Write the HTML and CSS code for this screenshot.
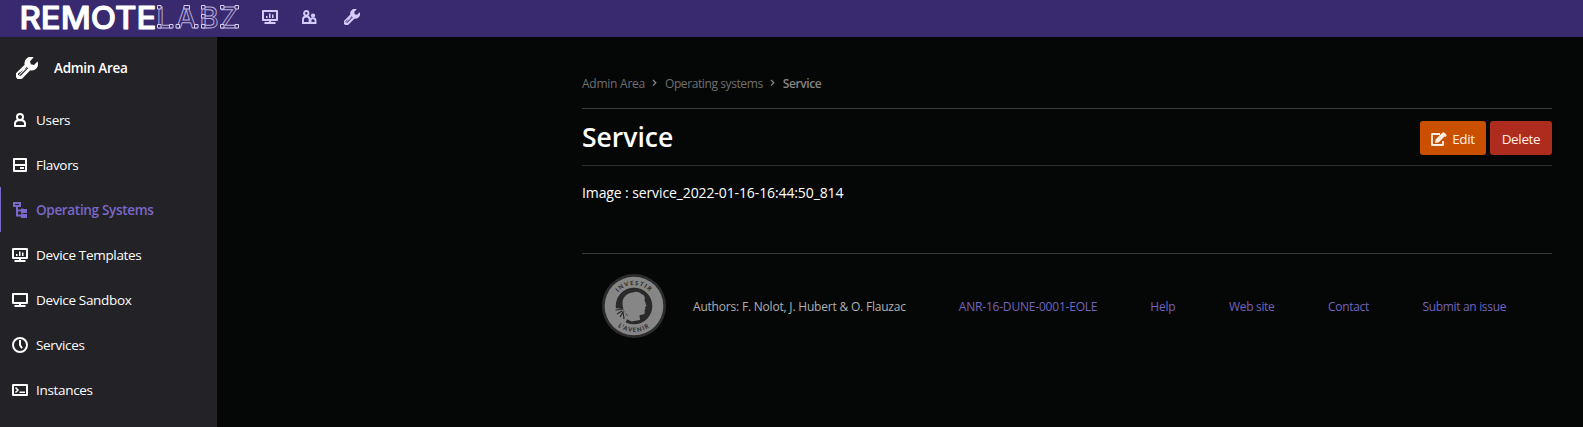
FILE: index.html
```
<!DOCTYPE html>
<html lang="en">
<head>
<meta charset="utf-8">
<title>Service - RemoteLabz</title>
<link rel="stylesheet" href="styles.css">
</head>
<body>
<svg width="0" height="0" class="defs">
  <defs>
    <symbol id="monitor-chart" viewBox="0 0 16 14"><path fill="none" stroke="currentColor" stroke-width="2" stroke-linejoin="round" d="M1 1h14v9H1z"/><path fill="currentColor" d="M7 9h2v3H7zM2.500 12h11v2h-11zM4 6h1.500v2H4zM7 3.500h1.500V8H7zM10 4.500h1.500V8H10z"/></symbol>
    <symbol id="monitor" viewBox="0 0 16 14"><path fill="none" stroke="currentColor" stroke-width="2" stroke-linejoin="round" d="M1 1h14v9H1z"/><path fill="currentColor" d="M7 9h2v3H7zM2.500 12h11v2h-11z"/></symbol>
    <symbol id="wrench" viewBox="0 0 16 16"><path fill="currentColor" fill-rule="evenodd" d="M12.800.35A4.600 4.600 0 0 0 6.300 5.600L.9 10.900a3 3 0 1 0 4.200 4.200l5.300-5.400a4.600 4.600 0 0 0 5.200-6.400l-2.500 2.500-2.300-.5-.6-2.300zM8.600 7.500l-5.700 5.400c-1.100 1-2.100 0-1.100-1z M8.800 8.200 3.700 13.400c-.9.900-2-.2-1.200-1.100l5.300-5.100z"/></symbol>
    <symbol id="user" viewBox="0 0 12 14"><path fill="none" stroke="currentColor" stroke-width="2" stroke-linejoin="round" d="M1 13v-2.500C1 8.700 2.500 7.600 4.300 7.200h3.400C9.500 7.600 11 8.700 11 10.500V13z"/><circle cx="6" cy="4.100" r="3" fill="none" stroke="currentColor" stroke-width="2"/></symbol>
    <symbol id="users" viewBox="0 0 15 14"><g fill="none" stroke="currentColor" stroke-width="1.900"><path d="M1 13V9.500c0-2 1.500-3 3.300-3s3.300 1 3.300 3V13z"/><circle cx="4.300" cy="3.200" r="2.200"/><path d="M8.500 13h5v-2.500c0-1.500-1.400-2.300-2.700-2.300-1.200 0-2.300.7-2.300 2.300z"/></g><circle cx="11" cy="5.500" r="2.100" fill="currentColor"/></symbol>
    <symbol id="disk" viewBox="0 0 14 14"><path fill="none" stroke="currentColor" stroke-width="2" stroke-linejoin="round" d="M1 1h12v12H1zM1 7h12"/><path fill="currentColor" d="M7 9h4v2H7z"/></symbol>
    <symbol id="tree" viewBox="0 0 14 16"><path fill="none" stroke="currentColor" stroke-width="2" d="M1 1h6v3H1zM4 4v9.500h5M4 8.500h5"/><path fill="currentColor" d="M8 6.500h2l1 .5h3v4H8zM8 11.500h2l1 .5h3v4H8z"/></symbol>
    <symbol id="clock" viewBox="0 0 16 16"><circle cx="8" cy="8" r="7" fill="none" stroke="currentColor" stroke-width="2"/><path fill="none" stroke="currentColor" stroke-width="2" d="M8 3v5l2 3.300"/></symbol>
    <symbol id="terminal" viewBox="0 0 16 12"><path fill="none" stroke="currentColor" stroke-width="2" stroke-linejoin="round" d="M1 1h14v10H1z"/><path fill="none" stroke="currentColor" stroke-width="1.500" d="M3.500 3.500 6 6 3.500 8.500M7.500 8.300H13"/></symbol>
    <symbol id="edit" viewBox="0 0 16 14"><path fill="none" stroke="currentColor" stroke-width="1.800" stroke-linejoin="round" d="M9 2H1v11h11V9"/><path fill="currentColor" d="M4.500 7.500 10.800 1.200l3 3L7.500 10.500 4 11zM11.400.7c.6-.7 1.400-.7 2 0l1.700 1.600c.6.600.6 1.400 0 2l-.8.800-3.500-3.600z"/></symbol>
    <symbol id="chevron" viewBox="0 0 5 8"><path fill="none" stroke="currentColor" stroke-width="1.300" d="M1 1l2.800 2.800L1 6.600"/></symbol>
  </defs>
</svg>
<header class="topbar">
  <svg class="logo" width="220" height="37" viewBox="0 0 220 37">
    <text class="logo-solid" x="-1.500" y="28.500" textLength="137" lengthAdjust="spacingAndGlyphs">REMOTE</text>
    <text class="logo-outline" x="135.500 155 178.500 198.500" y="27.500">LABZ</text>
    <g class="logo-nodes">
      <path d="M136.500 5.500h3.500v3.500h-3.500zM136.500 24.500h3.500v3.500h-3.500zM148.500 24.500h3.500v3.500h-3.500zM155 24.500h3.500v3.500H155zM163 5.500h5.500v3.500H163zM173.500 24.500h3.500v3.500h-3.500zM180.500 5.500h3.500v3.500h-3.500zM180.500 14.500h3.500v3.500h-3.500zM180.500 24.500h3.500v3.500h-3.500zM199.500 5.500h3.500v3.500h-3.500zM214 5.500h3.500v3.500H214zM199.500 24.500h3.500v3.500h-3.500zM214 24.500h3.500v3.500H214z"/>
    </g>
  </svg>
  <nav class="topnav">
    <svg class="w16 h14"><use href="#monitor-chart"/></svg>
    <svg class="w15 h14"><use href="#users"/></svg>
    <svg class="w16 h16"><use href="#wrench"/></svg>
  </nav>
</header>
<div class="shell">
  <aside class="sidebar">
    <div class="side-title"><svg class="big"><use href="#wrench"/></svg><span>Admin Area</span></div>
    <nav>
      <a class="item"><i><svg class="w12 h14"><use href="#user"/></svg></i><span>Users</span></a>
      <a class="item"><i><svg class="w14 h14"><use href="#disk"/></svg></i><span>Flavors</span></a>
      <a class="item active"><i><svg class="w14 h16"><use href="#tree"/></svg></i><span>Operating Systems</span></a>
      <a class="item"><i><svg class="w16 h14"><use href="#monitor-chart"/></svg></i><span>Device Templates</span></a>
      <a class="item"><i><svg class="w16 h14"><use href="#monitor"/></svg></i><span>Device Sandbox</span></a>
      <a class="item"><i><svg class="w16 h16"><use href="#clock"/></svg></i><span>Services</span></a>
      <a class="item"><i><svg class="w16 h12"><use href="#terminal"/></svg></i><span>Instances</span></a>
    </nav>
  </aside>
  <main class="content">
    <div class="crumbs"><span class="c1">Admin Area</span><svg><use href="#chevron"/></svg><span class="c2">Operating systems</span><svg><use href="#chevron"/></svg><b>Service</b></div>
    <div class="heading">
      <h1>Service</h1>
      <div class="actions">
        <a class="btn edit"><svg class="w16 h14"><use href="#edit"/></svg><span>Edit</span></a>
        <a class="btn delete"><span>Delete</span></a>
      </div>
    </div>
    <p class="image-line">Image : service_2022-01-16-16:44:50_814</p>
    <footer class="footer">
      <svg class="seal" viewBox="0 0 64 64">
        <defs><path id="arc-top" d="M11 32a21 21 0 0 1 42 0"/><path id="arc-bottom" d="M6 32a26 26 0 0 0 52 0"/></defs>
        <circle cx="32" cy="32" r="32" fill="#2c2c2c"/><circle cx="32" cy="32" r="29.300" fill="#868686"/><circle cx="32" cy="32" r="18.300" fill="#292929"/>
        <path fill="#868686" d="M20.500 29c0-6 4.500-10 10.500-10.500 3-1.500 6-.5 8.500 1.500 3 1 4 3.500 3 6l2 6-1.500 1 .5 2-1 1 .3 3c-.5 2-3.500 1.500-5.300 2.300l.5 4.700-8.500 1.500-5-2.500 1-4c-3-2-5-7-5-12z"/>
        <path fill="#868686" d="M12.500 34l8.500 1 5 8.500-3 6-8-6z"/><path stroke="#292929" stroke-width="1.200" fill="none" d="M13.500 36l7-.5M15 40l5-3M18 43l3-5 1 7"/>
        <text class="seal-text"><textPath href="#arc-top" startOffset="50%" text-anchor="middle">INVESTIR</textPath></text>
        <text class="seal-text"><textPath href="#arc-bottom" startOffset="50%" text-anchor="middle">L'AVENIR</textPath></text>
      </svg>
      <span class="authors">Authors: F. Nolot, J. Hubert &amp; O. Flauzac</span>
      <a>ANR-16-DUNE-0001-EOLE</a><a>Help</a><a class="tight">Web site</a><a class="tight">Contact</a><a class="tight">Submit an issue</a>
    </footer>
  </main>
</div>
</body>
</html>
```
FILE: styles.css
```
* { box-sizing: border-box; }
body { margin: 0; height: 427px; overflow: hidden; background: #050706; color: #fff; font: 14px/21px "Open Sans", "Noto Sans", sans-serif; display: flex; flex-direction: column; }
svg { flex: none; display: block; }
.defs { display: none; }
.w12 { width: 12px; } .w14 { width: 14px; } .w15 { width: 15px; } .w16 { width: 16px; }
.h12 { height: 12px; } .h14 { height: 14px; } .h16 { height: 16px; }
span, a, b, h1, p { white-space: nowrap; }
.topbar { height: 37px; flex: none; background: #392a70; display: flex; padding-left: 21px; }
.logo { overflow: visible; }
.logo-solid { font: 500 31px Inter, sans-serif; fill: #fff; stroke: #fff; stroke-width: 1px; stroke-linejoin: round; }
.logo-outline { font: 500 29px Inter, sans-serif; fill: #392a70; stroke: #b9b1dc; stroke-width: .9px; }
.logo-nodes { fill: #392a70; stroke: #d5cff0; stroke-width: 1px; }
.topnav { display: flex; align-items: center; padding: 0 0 3px 21px; color: #d4cbfa; }
.topnav svg + svg { margin-left: 24px; }
.topnav svg:last-child { margin-left: 27px; }
.shell { flex: 1; display: flex; min-height: 0; }
.sidebar { width: 217px; flex: none; background: #232227; }
.side-title { height: 60px; display: flex; align-items: center; padding: 2px 0 0 16px; gap: 16px; font-size: 13.500px; font-weight: 600; letter-spacing: -.3px; }
.side-title .big { width: 22px; height: 22px; }
.item { height: 45px; display: flex; align-items: center; padding-left: 9px; border-left: 1px solid transparent; font-size: 13.500px; letter-spacing: -.32px; }
.item i { width: 20px; margin-right: 6px; display: flex; justify-content: center; }
.item span { padding-top: 1px; }
.sidebar nav { color: #fff; }
.item.active { color: #7b68c8; border-color: #7b68c8; font-weight: 600; }
.content { flex: 1; padding: 35px 31px 0 365px; }
.crumbs { height: 37px; border-bottom: 1px solid #3a3b3b; display: flex; align-items: flex-start; color: #707070; font-size: 12px; line-height: 24px; }
.crumbs svg { width: 5px; height: 8px; margin: 7px 8px 0 7px; color: #858585; }
.crumbs b { font-weight: 600; color: #858585; letter-spacing: -.4px; }
.c1 { letter-spacing: -.25px; }
.c2 { letter-spacing: -.4px; }
.heading { height: 57px; border-bottom: 1px solid #2a2b2b; display: flex; justify-content: space-between; align-items: center; }
h1 { margin: 0; font-size: 26.500px; line-height: 36px; font-weight: 600; }
.actions { display: flex; gap: 4px; padding-top: 2px; }
.btn { height: 34px; border-radius: 3px; display: flex; align-items: center; justify-content: center; color: #ffeee6; padding-top: 2px; font-size: 13.500px; letter-spacing: -.35px; }
.edit { width: 66px; background: #ca5000; gap: 5px; }
.delete { width: 62px; background: #ad2c1d; }
.image-line { margin: 16px 0 0; height: 71px; letter-spacing: -.11px; }
.footer { border-top: 1px solid #3a3b3b; padding: 20px 0 0 20px; display: flex; align-items: center; font-size: 12px; color: #b0b0b0; letter-spacing: -.2px; }
.seal { width: 64px; height: 64px; margin-right: 27px; }
.seal-text { font: 700 6px Lato, sans-serif; fill: #252525; letter-spacing: 1.200px; }
.footer a { color: #7363bd; margin-left: 53px; }
.footer .tight { letter-spacing: -.32px; margin-left: 53.500px; }
```
